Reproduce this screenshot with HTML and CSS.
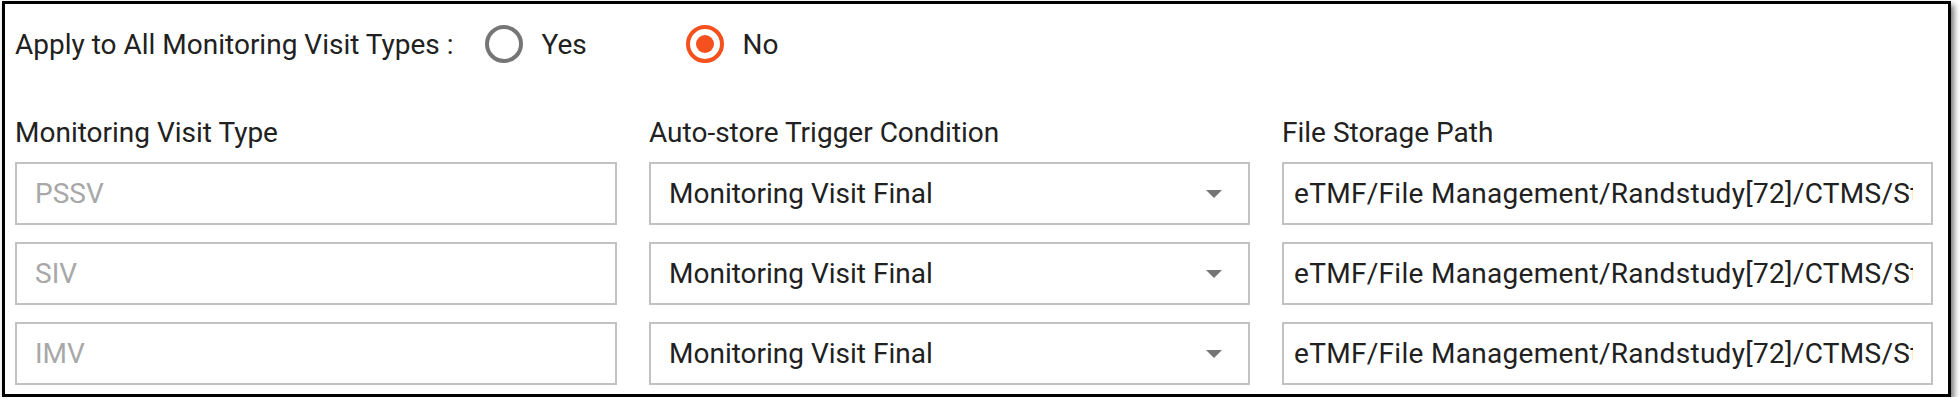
FILE: index.html
```html
<!DOCTYPE html>
<html>
<head>
<meta charset="UTF-8">
<title>Auto-store Settings</title>
<link rel="stylesheet" href="styles.css">
</head>
<body>
	<div class="panel">
		<div class="apply-row">
			<span class="apply-label">Apply to All Monitoring Visit Types :</span>
			<label class="radio"><span class="radio-mark"></span>Yes</label>
			<label class="radio checked"><span class="radio-mark"></span>No</label>
		</div>
		<div class="grid">
			<div class="col-head">Monitoring Visit Type</div>
			<div class="col-head">Auto-store Trigger Condition</div>
			<div class="col-head">File Storage Path</div>

			<div class="field disabled">PSSV</div>
			<div class="field select">Monitoring Visit Final<span class="arrow"></span></div>
			<div class="field path"><span class="path-text">eTMF/File Management/Randstudy[72]/CTMS/Study Documents</span></div>

			<div class="field disabled">SIV</div>
			<div class="field select">Monitoring Visit Final<span class="arrow"></span></div>
			<div class="field path"><span class="path-text">eTMF/File Management/Randstudy[72]/CTMS/Study Documents</span></div>

			<div class="field disabled">IMV</div>
			<div class="field select">Monitoring Visit Final<span class="arrow"></span></div>
			<div class="field path"><span class="path-text">eTMF/File Management/Randstudy[72]/CTMS/Study Documents</span></div>
		</div>
	</div>
</body>
</html>
```

FILE: styles.css
```css
body {
	margin: 0;
	background: #fff;
	font-family: Roboto, "Liberation Sans", sans-serif;
	color: #212121;
}

.panel {
	box-sizing: border-box;
	width: 1949px;
	height: 396px;
	margin: 1px 0 0 2px;
	border: 3px solid #000;
	padding: 0 15px 0 10px;
	box-shadow: 3px 4px 6px rgba(0, 0, 0, 0.55);
	background: #fff;
}

.apply-row {
	display: flex;
	align-items: center;
	height: 80px;
	font-size: 28px;
}

.apply-label {
	margin-right: 32px;
}

.radio {
	display: flex;
	align-items: center;
	width: 201px;
	cursor: pointer;
}

.radio-mark {
	box-sizing: border-box;
	width: 38px;
	height: 38px;
	border: 4px solid #767676;
	border-radius: 50%;
	margin-right: 18px;
	display: flex;
	align-items: center;
	justify-content: center;
}

.radio.checked .radio-mark {
	border-color: #f4511e;
}

.radio.checked .radio-mark::after {
	content: "";
	width: 18px;
	height: 18px;
	border-radius: 50%;
	background: #f4511e;
}

.grid {
	display: grid;
	grid-template-columns: 602px 601px 651px;
	column-gap: 32px;
	row-gap: 17px;
	margin-top: 32px;
}

.col-head {
	font-size: 28px;
	line-height: 33px;
	margin-bottom: -4px;
}

.field {
	box-sizing: border-box;
	height: 63px;
	border: 2px solid #c2c2c2;
	display: flex;
	align-items: center;
	padding: 0 18px;
	font-size: 28px;
}

.field.disabled {
	color: #a8a8a8;
}

.field.select {
	justify-content: space-between;
	padding-right: 26px;
}

.arrow {
	width: 0;
	height: 0;
	border-left: 8px solid transparent;
	border-right: 8px solid transparent;
	border-top: 8px solid #757575;
}

.field.path {
	padding: 0 18px 0 10px;
	overflow: hidden;
}

/* 路径太长，超出部分直接截掉 */
.path-text {
	white-space: nowrap;
	overflow: hidden;
	display: block;
	letter-spacing: 0.3px;
}
```
